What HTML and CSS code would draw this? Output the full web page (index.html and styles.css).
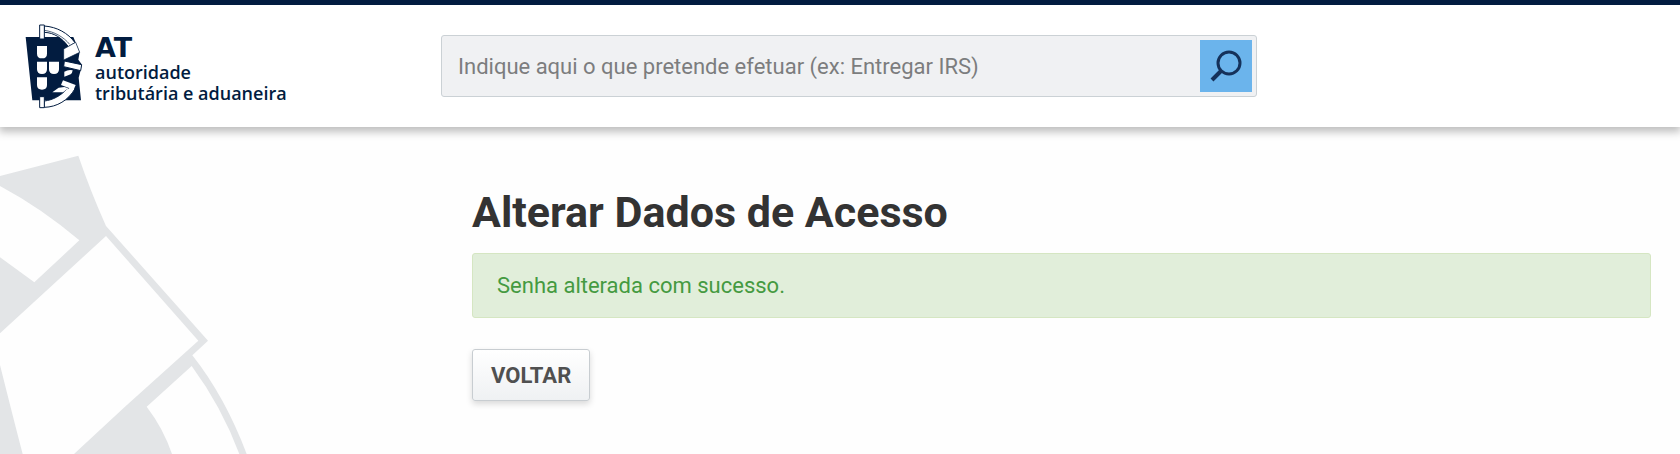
FILE: index.html
```html
<!DOCTYPE html>
<html lang="pt">
<head>
    <meta charset="UTF-8">
    <meta name="viewport" content="width=device-width, initial-scale=1.0">
    <title>Alterar Dados de Acesso</title>
    <link rel="stylesheet" href="styles.css">
</head>
<body>
    <header class="header">
        <a class="logo" href="#">
            <svg class="logo-icon" viewBox="76 71 174 255" aria-hidden="true">
                <path fill="#021c40" d="M78 110H221L240 155L236 178L246 192L243 210L237 232L244 300H98Z"/>
                <!-- armillary sphere -->
                <path fill="#fff" stroke="#021c40" stroke-width="3" d="M134 77C172 80 205 98 226 127L206 139C188 114 164 97 134 96Z"/>
                <path fill="none" stroke="#021c40" stroke-width="2" d="M134 90C164 94 192 110 210 132"/>
                <path fill="#fff" stroke="#021c40" stroke-width="2" d="M192 146L228 126L240 156L192 179Z"/>
                <path fill="#fff" stroke="#021c40" stroke-width="3" d="M194 182L246 193L243 211L192 199Z"/>
                <path fill="#fff" d="M194 214Q206 207 219 210Q218 219 213 222L194 229Z"/>
                <path fill="#fff" stroke="#021c40" stroke-width="3" d="M134 302C160 299 184 286 201 266L213 260L226 265C206 300 172 320 134 321Z"/>
                <path fill="#fff" d="M190 240L228 254L222 268L184 254Z"/>
                <path fill="#fff" d="M158 276L177 262L194 260L206 264L190 276Z"/>
                <path fill="#fff" stroke="#021c40" stroke-width="3" d="M120 74H134V116H120ZM120 289H134V322H120Z"/>
                <!-- shields -->
                <path fill="#fff" d="M112 137H142V160Q142 174 127 174Q112 174 112 160ZM112 184H142V207Q142 221 127 221Q112 221 112 207ZM148 184H178V207Q178 221 163 221Q148 221 148 207ZM112 231H142V254Q142 268 127 268Q112 268 112 254Z"/>
            </svg>
            <span class="logo-text"><strong>AT</strong>autoridade<br>tributária e aduaneira</span>
        </a>
        <form class="search">
            <input class="search-input" type="text" aria-label="Pesquisar" placeholder="Indique aqui o que pretende efetuar (ex: Entregar IRS)">
            <button class="search-button" type="submit" aria-label="Pesquisar">
                <svg viewBox="0 0 52 52" aria-hidden="true">
                    <circle cx="29" cy="23" r="11" fill="none" stroke="#15315a" stroke-width="3"/>
                    <path d="M21 31L12 40" stroke="#15315a" stroke-width="4"/>
                </svg>
            </button>
        </form>
    </header>

    <div class="page">
        <div class="sidebar">
            <svg class="sidebar-art" viewBox="0 -9 750 981" aria-hidden="true">
                <path fill="#e3e5e7" d="M0 138L235 77Q270 180 318 288L624 632L577 676Q675 800 740 972H718Q665 830 575 708L440 830Q490 895 516 972H222L375 830L595 632L318 318L0 610V382L103 457L238 331Q125 235 0 168ZM0 705Q40 865 68 972H0Z"/>
            </svg>
        </div>
        <main class="content">
            <h1>Alterar Dados de Acesso</h1>
            <div class="alert" role="status">Senha alterada com sucesso.</div>
            <button class="btn" type="button">VOLTAR</button>
        </main>
    </div>
</body>
</html>
```
FILE: styles.css
```css
* {
    box-sizing: border-box;
}

body {
    margin: 0;
    font-family: Roboto, sans-serif;
    font-size: 22px;
    color: #333;
    background-color: #fefefe;
}

.header {
    display: grid;
    grid-template-columns: 25% 50% 25%;
    align-items: center;
    position: relative;
    z-index: 1;
    height: 127px;
    border-top: 5px solid #021c40;
    background-color: #fff;
    box-shadow: 0 4px 8px 1px rgba(0, 0, 0, 0.25);
}

.logo {
    display: flex;
    align-items: center;
    gap: 12px;
    padding-left: 25px;
    color: #021c40;
    text-decoration: none;
}

.logo-icon {
    width: 58px;
    height: 85px;
}

.logo-text {
    padding-top: 4px;
    font-family: "Open Sans", sans-serif;
    font-size: 18px;
    font-weight: 600;
    line-height: 21px;
    white-space: nowrap;
}

.logo-text strong {
    display: block;
    font-family: "DejaVu Sans", sans-serif;
    font-size: 27px;
    font-weight: 700;
    line-height: 29px;
}

.search {
    display: flex;
    margin: 0 3px 0 21px;
    padding: 4px;
    border: 1px solid #cbd1d5;
    border-radius: 3px;
    background-color: #f0f1f3;
}

.search-input {
    flex: 1;
    min-width: 0;
    padding: 0 12px;
    border: none;
    outline: none;
    background: none;
    font-family: inherit;
    font-size: 22px;
}

.search-input::placeholder {
    color: #7c7d7e;
}

.search-button {
    width: 52px;
    height: 52px;
    padding: 0;
    border: none;
    background-color: #6bb4ec;
    cursor: pointer;
}

.search-button svg {
    display: block;
}

.page {
    display: grid;
    grid-template-columns: 25% 1fr;
}

.sidebar-art {
    display: block;
    width: 250px;
    height: 327px;
}

.content {
    padding: 59px 29px 0 52px;
}

h1 {
    margin: 0 0 15px;
    font-size: 43px;
    line-height: 52px;
}

.alert {
    margin-bottom: 31px;
    padding: 18px 24px;
    border: 1px solid #d5e6c2;
    border-radius: 3px;
    background-color: #e1eeda;
    color: #459a41;
    line-height: 27px;
}

.btn {
    height: 52px;
    padding: 0 18px;
    border: 1px solid #c8cdd1;
    border-radius: 3px;
    background: linear-gradient(#fff, #eff1f3);
    box-shadow: 0 3px 6px rgba(0, 0, 0, 0.15);
    font-family: inherit;
    font-size: 22px;
    font-weight: 700;
    color: #505050;
    cursor: pointer;
}
```
